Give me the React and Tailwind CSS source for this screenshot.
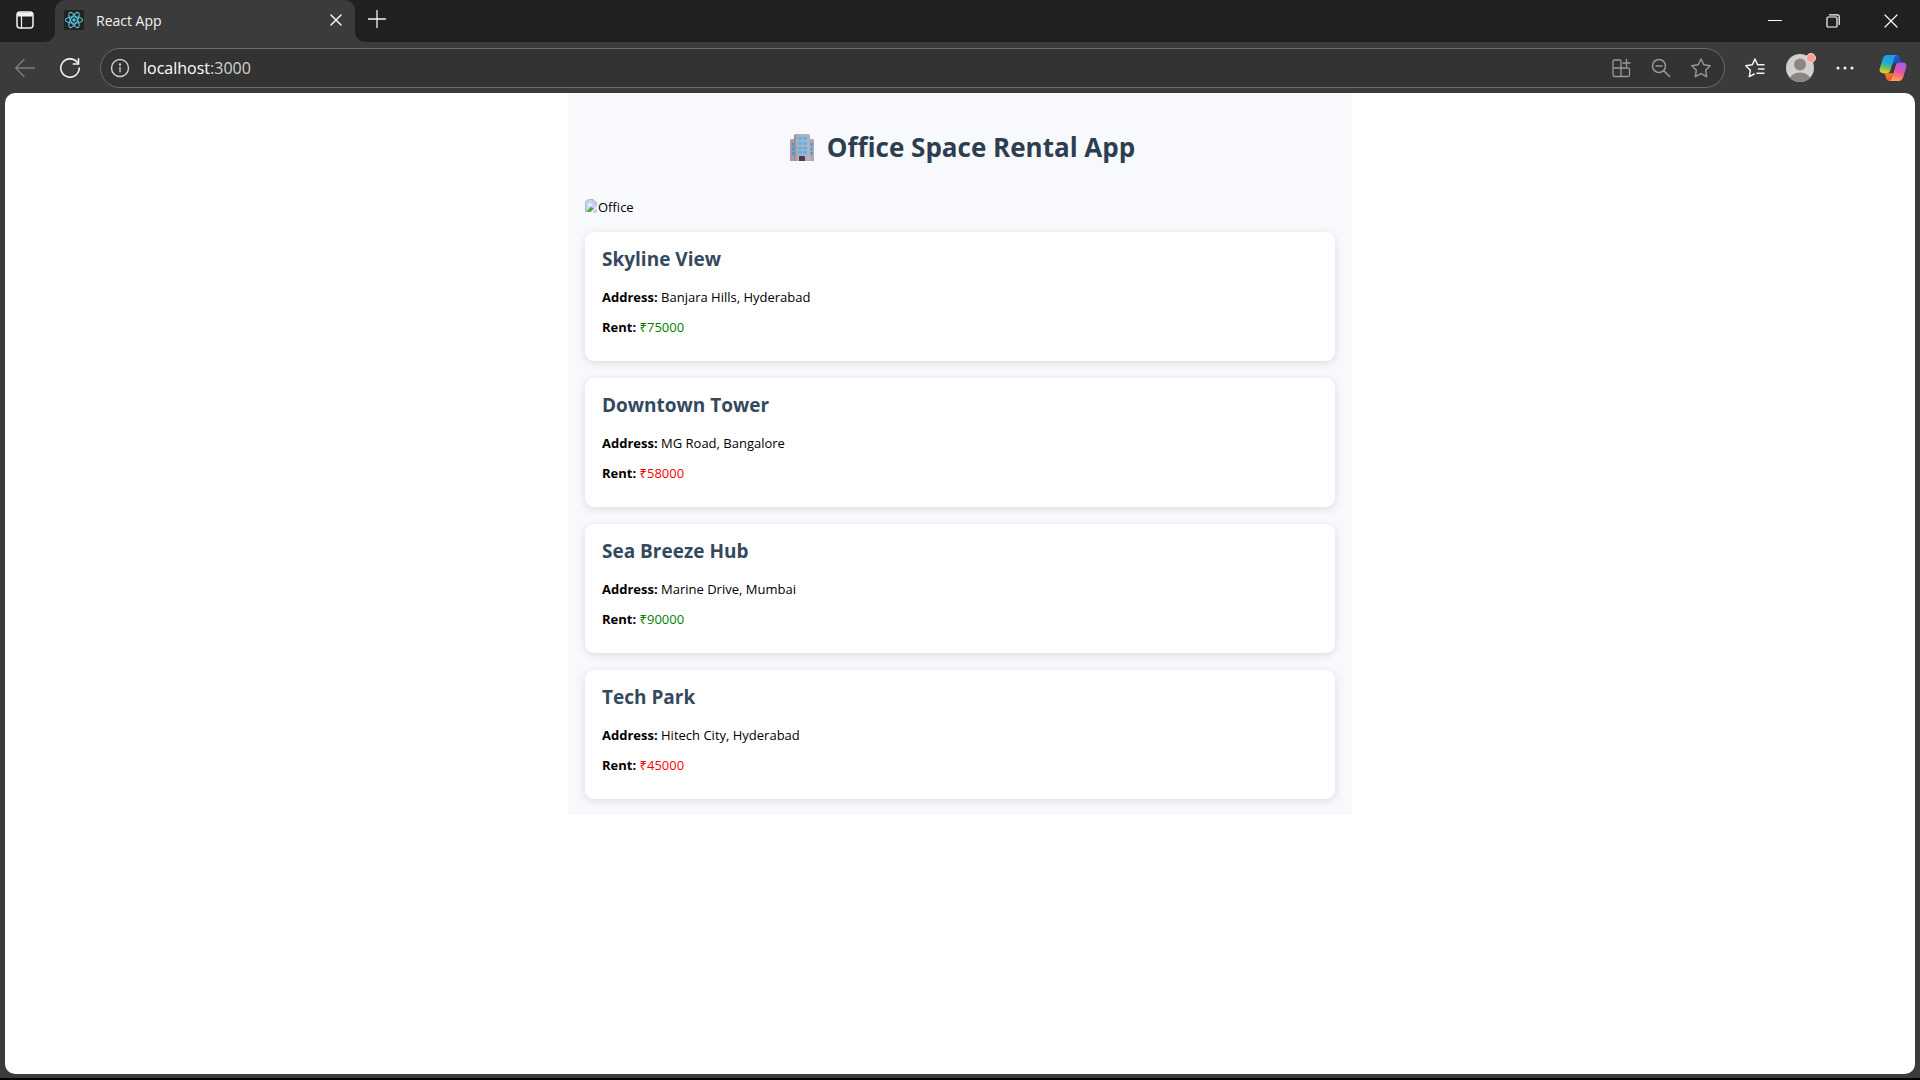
const offices = [
  { name: "Skyline View", address: "Banjara Hills, Hyderabad", rent: 75000 },
  { name: "Downtown Tower", address: "MG Road, Bangalore", rent: 58000 },
  { name: "Sea Breeze Hub", address: "Marine Drive, Mumbai", rent: 90000 },
  { name: "Tech Park", address: "Hitech City, Hyderabad", rent: 45000 },
];

function Stroke({ size = 20, width = 1.3, className = "", children }) {
  return (
    <svg
      width={size}
      height={size}
      viewBox={`0 0 ${size} ${size}`}
      fill="none"
      stroke="currentColor"
      strokeWidth={width}
      strokeLinecap="round"
      strokeLinejoin="round"
      className={`shrink-0 ${className}`}
      aria-hidden="true"
    >
      {children}
    </svg>
  );
}

function ReactLogo() {
  return (
    <svg width="20" height="20" viewBox="0 0 20 20" fill="none" stroke="#58c4dc" strokeWidth="1.1" className="shrink-0" aria-hidden="true">
      <rect width="20" height="20" rx="2" fill="#222222" stroke="none" />
      <ellipse cx="10" cy="10" rx="8.6" ry="3.3" />
      <ellipse cx="10" cy="10" rx="8.6" ry="3.3" transform="rotate(60 10 10)" />
      <ellipse cx="10" cy="10" rx="8.6" ry="3.3" transform="rotate(120 10 10)" />
      <circle cx="10" cy="10" r="1.7" fill="#58c4dc" stroke="none" />
    </svg>
  );
}

function CopilotLogo() {
  return (
    <svg width="28" height="28" viewBox="0 0 28 28" className="shrink-0" aria-hidden="true">
      <defs>
        <linearGradient id="cpLeft" x1="0.5" y1="0" x2="0.3" y2="1">
          <stop offset="0" stopColor="#1a9df0" />
          <stop offset="0.4" stopColor="#1fa7d8" />
          <stop offset="0.68" stopColor="#62bf6b" />
          <stop offset="1" stopColor="#f4cf16" />
        </linearGradient>
        <linearGradient id="cpRight" x1="0.6" y1="0" x2="0.3" y2="1">
          <stop offset="0" stopColor="#a35bf0" />
          <stop offset="0.45" stopColor="#e3559f" />
          <stop offset="0.75" stopColor="#fb7d68" />
          <stop offset="1" stopColor="#ffab54" />
        </linearGradient>
        <linearGradient id="cpTop" x1="0" y1="0" x2="1" y2="1">
          <stop offset="0" stopColor="#1668d9" />
          <stop offset="1" stopColor="#1b43bb" />
        </linearGradient>
        <linearGradient id="cpBottom" x1="0" y1="0" x2="1" y2="1">
          <stop offset="0" stopColor="#f79a29" />
          <stop offset="1" stopColor="#e8402f" />
        </linearGradient>
      </defs>
      <path d="M11 1h6.500c2 0 2.800 1 3.300 2.800l.9 3.200c.3 1 .9 1.500 2 1.500h-6.200c-2 0-2.900 1-3.500 3z" fill="url(#cpTop)" />
      <path d="M17 27h-6.500c-2 0-2.800-1-3.300-2.800l-.9-3.200c-.3-1-.9-1.800-2-1.800h6.200c2 0 2.900-1 3.500-3z" fill="url(#cpBottom)" />
      <path d="M8.500 1h9.300c-1.700.3-2.300 1.500-2.800 3.200l-3.600 12c-.6 2-1.700 3-3.700 3H4.300C1.300 19.200 0 17.200.8 14.300L3.700 5C4.500 2.400 6 1 8.500 1z" fill="url(#cpLeft)" />
      <path d="M19.500 27h-9.300c1.700-.3 2.300-1.500 2.800-3.200l3.600-12.200c.6-2 1.700-3.100 3.700-3.100h3.400c3 0 4.300 2.100 3.500 5L24.300 23c-.8 2.600-2.300 4-4.800 4z" fill="url(#cpRight)" />
      <path d="M15.200 10.500 12.800 19" stroke="#3b3b3b" strokeWidth="3" fill="none" />
    </svg>
  );
}

function Avatar() {
  return (
    <svg width="30" height="30" viewBox="0 0 30 30" className="overflow-visible" aria-hidden="true">
      <defs>
        <clipPath id="avatarClip">
          <circle cx="15" cy="15" r="14" />
        </clipPath>
      </defs>
      <circle cx="15" cy="15" r="14" fill="#d2d0ce" />
      <g clipPath="url(#avatarClip)" fill="#8a8684">
        <circle cx="15" cy="11.500" r="6" />
        <ellipse cx="15" cy="26" rx="10" ry="6.500" />
      </g>
      <circle cx="26" cy="5" r="4.500" fill="#ff9f98" stroke="#f0d9d6" strokeWidth="1" />
    </svg>
  );
}

function OfficeBuilding() {
  const rows = [4, 9, 14, 18];
  return (
    <svg width="26" height="28" viewBox="0 0 26 28" className="shrink-0" aria-hidden="true">
      <defs>
        <linearGradient id="tower" x1="0" x2="1">
          <stop offset="0" stopColor="#8f8696" />
          <stop offset="0.2" stopColor="#b3abb8" />
          <stop offset="1" stopColor="#b9b1bd" />
        </linearGradient>
      </defs>
      <path d="M1 28V7.500Q1 6 2.500 6H6v22z" fill="#a59cab" />
      <path d="M25 28V7.500Q25 6 23.500 6H20v22z" fill="#b0a7b5" />
      <path d="M5 28V3q0-2 2-2h12q2 0 2 2v25z" fill="url(#tower)" />
      {rows.map((y) => (
        <g key={y} fill="#47b9f5">
          <rect x="9" y={y} width="4" height="2.600" />
          <rect x="14" y={y} width="4" height="2.600" />
        </g>
      ))}
      {[10, 14.500, 19].map((y) => (
        <g key={y} fill="#2f9fe8">
          <rect x="3" y={y} width="2" height="2.800" />
          <rect x="21.500" y={y} width="2" height="2.800" />
        </g>
      ))}
      <path d="M10 28v-4q0-1 1-1h4q1 0 1 1v4z" fill="#4b3a55" />
    </svg>
  );
}

function BrokenImage() {
  return (
    <svg width="12" height="14" viewBox="0 0 12 14" className="shrink-0" aria-hidden="true">
      <path d="M0 13V4Q1 .8 4.500.5H8L11.500 4v4L6 13z" fill="#c5d7f7" />
      <path d="M.5 13V4Q1 .8 4.500.5H8L11.500 4v3" fill="none" stroke="#b4b8be" />
      <path d="M3 5.500q1-1.500 2.500-.5 2 0 1.500 1.500H3z" fill="#ffffff" />
      <path d="M8 .5V4h3.500z" fill="#f4f4f4" stroke="#a3a8ae" strokeWidth=".7" />
      <path d="M1 12.500 6 8l3 1.500L5.500 13z" fill="#4eab36" />
      <path d="M7.500 13.500 11.500 9.500v4z" fill="#b4b8be" />
    </svg>
  );
}

function TabStrip() {
  return (
    <header className="flex h-[42px] shrink-0 bg-[#3b3b3b] text-[#f3f3f3]">
      <div className="flex w-[55px] items-center rounded-br-[10px] bg-[#202020] pb-0.5 pl-[15px]">
        <button aria-label="Tab actions menu">
          <Stroke width={1.5}>
            <rect x="2" y="2" width="16" height="16" rx="3" />
            <path d="M2.500 4.500h15" strokeWidth="4" strokeLinecap="butt" />
            <path d="M6.500 6v12" strokeWidth="1.200" />
          </Stroke>
        </button>
      </div>
      <div className="w-[300px] bg-[#202020]">
        <div className="flex h-full items-center rounded-t-[10px] bg-[#3b3b3b] pr-2.5 pb-0.5 pl-[9px]">
          <ReactLogo />
          <span className="ml-3 flex-1 text-[14px]">React App</span>
          <button aria-label="Close tab" className="p-0.5">
            <Stroke size={14} width={1.5}>
              <path d="M2 2l10 10M12 2 2 12" />
            </Stroke>
          </button>
        </div>
      </div>
      <div className="flex flex-1 items-center rounded-bl-[10px] bg-[#202020] pl-3">
        <button aria-label="New tab" className="pb-1">
          <Stroke>
            <path d="M10 1.500v17M1.500 10h17" />
          </Stroke>
        </button>
        <div className="ml-auto flex h-full text-white">
          <button aria-label="Minimize" className="flex w-[58px] items-center justify-center">
            <Stroke size={14} width={1}>
              <path d="M.5 6.500h13" />
            </Stroke>
          </button>
          <button aria-label="Restore" className="flex w-[58px] items-center justify-center">
            <Stroke size={14} width={1.2}>
              <rect x="1" y="3" width="10" height="10" rx="1" />
              <path d="M3.500.8h8q1.700 0 1.700 1.700v8" />
            </Stroke>
          </button>
          <button aria-label="Close window" className="flex w-[58px] items-center justify-center">
            <Stroke size={14} width={1.2}>
              <path d="M1 1l12 12M13 1 1 13" />
            </Stroke>
          </button>
        </div>
      </div>
    </header>
  );
}

function Toolbar() {
  return (
    <nav className="flex h-[51px] shrink-0 items-center bg-[#3b3b3b] pl-[15px] text-[#f3f3f3]">
      <button aria-label="Back" className="text-[#7d7d7d]">
        <Stroke>
          <path d="M19.500 10H1M9 1.500.700 10 9 18.500" />
        </Stroke>
      </button>
      <button aria-label="Refresh" className="ml-[25px]">
        <Stroke width={1.6}>
          <path d="M17.200 4.300A9.200 9.200 0 1 0 19.200 10" />
          <path d="M18.500.8v5.200h-5.200" strokeLinejoin="miter" />
        </Stroke>
      </button>
      <div className="ml-5 flex h-10 flex-1 items-center rounded-full border border-[#6b6b6b] bg-[#333333] pr-[13px]">
        <button aria-label="View site information" className="ml-[9px] text-[#d0d0d0]">
          <Stroke width={1.4}>
            <circle cx="10" cy="10" r="8.500" />
            <path d="M10 9.500v4.300" />
            <circle cx="10" cy="6.500" r=".5" fill="currentColor" />
          </Stroke>
        </button>
        <a href="#address" className="ml-[13px] flex-1 text-[16px] text-white">
          localhost<span className="text-[#d2d2d2]">:3000</span>
        </a>
        <div className="flex items-center gap-5 text-[#999999]">
          <button aria-label="Apps">
            <Stroke>
              <path d="M10 10V3.500Q10 2 8.500 2H3.500Q2 2 2 3.500v13Q2 18.500 3.500 18.500h13q2 0 2-1.500v-5.500q0-1.500-1.500-1.500H2M10 10v8.500M15.500 1.500v7M12 5h7" />
            </Stroke>
          </button>
          <button aria-label="Zoom out">
            <Stroke width={1.5}>
              <circle cx="8" cy="8" r="6.500" />
              <path d="M13 13l5.500 5.500M5 8h6" />
            </Stroke>
          </button>
          <button aria-label="Add this page to favorites">
            <Stroke width={1.4}>
              <path d="M10 1l2.800 5.800 6.400.9-4.600 4.500 1.100 6.400L10 15.600l-5.700 3 1.100-6.400L.8 7.700l6.400-.9z" />
            </Stroke>
          </button>
        </div>
      </div>
      <div className="flex items-center pl-5">
        <button aria-label="Favorites">
          <Stroke width={1.5}>
            <path d="M12.600 6.800 10 1 7.200 6.800l-6.400.9 4.600 4.500-1.100 6.400 4.900-2.600M12.600 6.800H19M13.500 11H19M12 15.300h7" />
          </Stroke>
        </button>
        <button aria-label="Profile" className="ml-5">
          <Avatar />
        </button>
        <button aria-label="Settings and more" className="ml-5">
          <svg width="20" height="20" viewBox="0 0 20 20" fill="currentColor" aria-hidden="true">
            <circle cx="3" cy="10" r="1.500" />
            <circle cx="10" cy="10" r="1.500" />
            <circle cx="17" cy="10" r="1.500" />
          </svg>
        </button>
        <button aria-label="Copilot" className="mr-[13px] ml-6">
          <CopilotLogo />
        </button>
      </div>
    </nav>
  );
}

function OfficeCard({ office }) {
  return (
    <article className="rounded-[9px] bg-white px-[17px] pt-3 pb-[25px] shadow-[0_2px_8px_rgba(0,0,0,0.12)]">
      <h2 className="text-[19px] leading-[30px] font-bold text-[#34495e]">{office.name}</h2>
      <p className="mt-3.5 leading-[18px]">
        <strong>Address:</strong> {office.address}
      </p>
      <p className="mt-3 leading-[18px]">
        <strong>Rent:</strong>{" "}
        <span className={office.rent < 60000 ? "text-[#ff0000]" : "text-[#008000]"}>₹{office.rent}</span>
      </p>
    </article>
  );
}

export default function App() {
  return (
    <div className="flex min-h-screen flex-col border-b-2 border-black bg-[#3b3b3b] font-['Open_Sans','Noto_Sans',sans-serif]">
      <TabStrip />
      <Toolbar />
      <div className="mx-[5px] mb-1 flex-1 rounded-[10px] bg-white">
        <main className="mx-auto max-w-[784px] bg-[#f8f9fd] px-[17px] pb-4 text-[13px] text-black">
          <h1 className="flex items-center justify-center gap-3 pt-9 pb-[34px] pl-1 text-[26px] leading-9 font-bold text-[#2c3e50]">
            <OfficeBuilding />
            Office Space Rental App
          </h1>
          <div role="img" aria-label="Office" className="flex h-[17px] items-start gap-px leading-4">
            <BrokenImage />
            <span>Office</span>
          </div>
          <section className="mt-4 flex flex-col gap-[17px]">
            {offices.map((office) => (
              <OfficeCard key={office.name} office={office} />
            ))}
          </section>
        </main>
      </div>
    </div>
  );
}
